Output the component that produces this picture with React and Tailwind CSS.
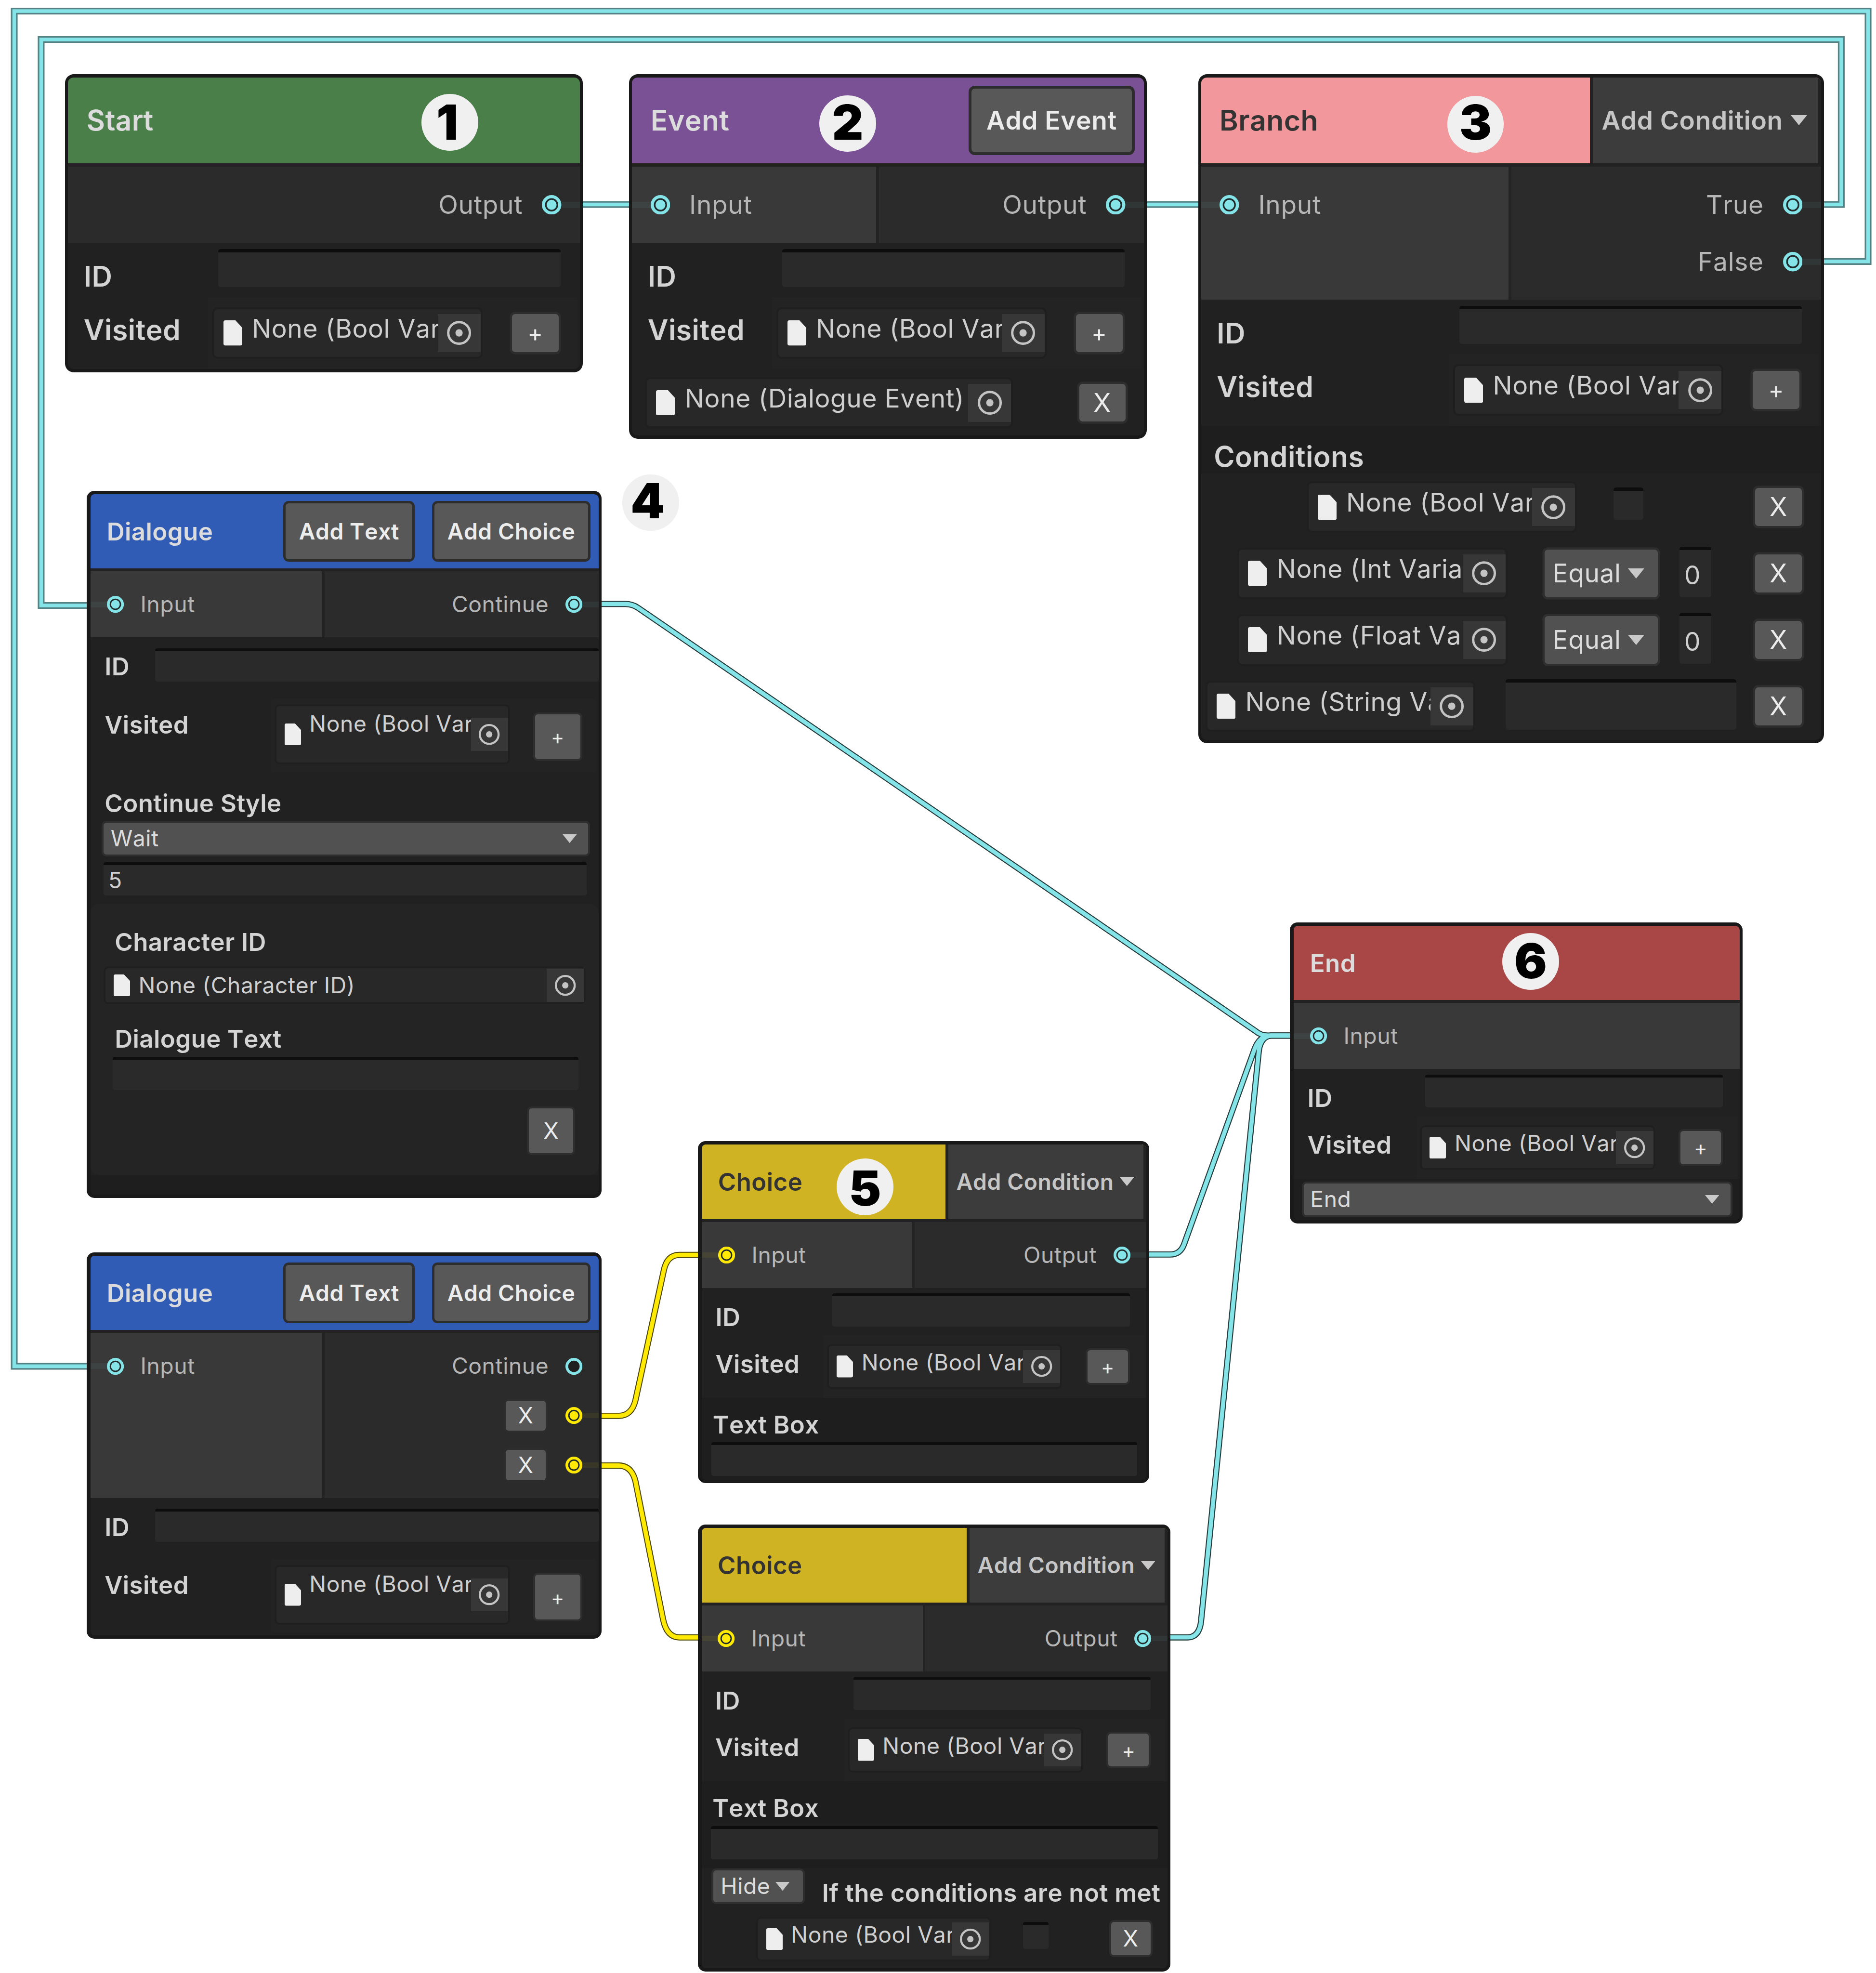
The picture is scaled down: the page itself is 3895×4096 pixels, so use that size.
import React from "react";
import clsx from "clsx";

/* ---------- primitives ---------- */

const label =
  "font-semibold tracking-[0.008em] [font-kerning:none] text-[length:calc(var(--spacing)*22.5)] leading-20 whitespace-nowrap";
const type = "tracking-[0.012em] [font-kerning:none] whitespace-nowrap";
const body = "tracking-[0.012em] [font-kerning:none] whitespace-nowrap text-[length:calc(var(--spacing)*20.4)] leading-20";

function Label({ className, children }) {
  return <div className={clsx(label, "text-[#d4d4d4]", className)}>{children}</div>;
}

function Caret({ className }) {
  return (
    <svg viewBox="0 0 12 8" preserveAspectRatio="none" className={clsx("h-8 w-13 shrink-0", className)}>
      <path d="M0 0H12L6 8Z" fill="#c9c9c9" />
    </svg>
  );
}

function Port({ tone = "cyan", empty = false }) {
  const color = tone === "yellow" ? "#ffe905" : "#84e4e7";
  return (
    <svg viewBox="0 0 16 16" className="size-15.5 shrink-0">
      <circle cx="8" cy="8" r="6.7" fill={empty ? "#1f1f1f" : "#212a2b"} stroke={color} strokeWidth="2.6" />
      {!empty && <circle cx="8" cy="8" r="4.1" fill={color} />}
    </svg>
  );
}

function Stub({ tone = "cyan", empty }) {
  return (
    <div
      className={clsx(
        "h-5 w-14.75 shrink-0",
        empty ? "" : tone === "yellow" ? "bg-[#ffe905]/7" : "bg-[#84e4e7]/6"
      )}
    />
  );
}

function Input({ className, children }) {
  return (
    <div
      className={clsx(
        "flex shrink-0 items-center rounded-[calc(var(--spacing)*2)] border-t-[length:calc(var(--spacing)*2.7)] border-[#0d0d0d] bg-[#2a2a2a] text-[#cfcfcf]",
        body,
        className
      )}
    >
      {children}
    </div>
  );
}

const buttonBox =
  "flex shrink-0 items-center justify-center rounded-[calc(var(--spacing)*2.5)] bg-[#585858] shadow-[0_0_0_calc(var(--spacing)*1.8)_#2d2d2d] text-[#ececec]";

function Button({ className, children }) {
  return (
    <div className={clsx(buttonBox, className)}>
      <span className={body}>{children}</span>
    </div>
  );
}

function Plus({ className }) {
  return (
    <div className={clsx(buttonBox, className)}>
      <span className={clsx(type, "pt-0.5 text-[length:calc(var(--spacing)*18.5)] leading-20")}>+</span>
    </div>
  );
}

function Dropdown({ className, children, caret = "ml-auto mr-10.5" }) {
  return (
    <div
      className={clsx(
        "flex shrink-0 items-center rounded-[calc(var(--spacing)*2.5)] bg-[#515151] shadow-[0_0_0_calc(var(--spacing)*1.8)_#2e2e2e]",
        className
      )}
    >
      <span className={clsx(body, "text-[#dcdcdc]")}>{children}</span>
      <Caret className={caret} />
    </div>
  );
}

function ObjectField({ className = "w-211.75 h-37.75", raise = "mb-7.5", children }) {
  return (
    <div
      className={clsx(
        "flex shrink-0 items-center rounded-[calc(var(--spacing)*2.5)] bg-[#282828] shadow-[0_0_0_calc(var(--spacing)*1.5)_#1f1f1f]",
        className
      )}
    >
      <svg viewBox="0 0 15 20" preserveAspectRatio="none" className="ml-7.25 h-20 w-15 shrink-0">
        <path d="M1.5 0H9.5L15 6V18.5Q15 20 13.5 20H1.5Q0 20 0 18.5V1.5Q0 0 1.5 0Z" fill="#eeeeee" />
      </svg>
      <div className={clsx("ml-7.75 min-w-0 flex-1 overflow-hidden", raise)}>
        <div className={clsx(type, "text-[length:calc(var(--spacing)*20.4)] leading-28 text-[#cfcfcf]")}>{children}</div>
      </div>
      <div className="flex h-30.25 w-34 shrink-0 items-center justify-center bg-[#373737]">
        <svg viewBox="0 0 20 20" className="size-20">
          <circle cx="10" cy="10" r="8.6" fill="none" stroke="#c4c4c4" strokeWidth="1.9" />
          <circle cx="10" cy="10" r="2.9" fill="#c4c4c4" />
        </svg>
      </div>
    </div>
  );
}

/* ---------- node parts ---------- */

function Node({ place, size, scale, border, children }) {
  return (
    <div className={clsx("absolute", place)}>
      <div className={scale}>
        <div
          className={clsx(
            "flex flex-col overflow-hidden rounded-[calc(var(--spacing)*7)] border-[#191919] bg-[#212121]",
            border,
            size
          )}
        >
          {children}
        </div>
      </div>
    </div>
  );
}

const LARGE = {
  scale: "[--spacing:2.6123px]",
  border: "border-x-[6px] border-y-[7px]",
};
const SMALL = {
  scale: "[--spacing:2.2693px]",
  border: "border-y-[7px] border-l-[8px] border-r-[6px]",
};

function Header({ title, color, ink = "text-[#dcdcdc]", children }) {
  return (
    <div className={clsx("flex h-68 shrink-0 items-center", color)}>
      <span className={clsx(label, ink, "mt-0.5 ml-14.75")}>{title}</span>
      {children}
    </div>
  );
}

function HeaderButton({ className, children }) {
  return (
    <div
      className={clsx(
        "flex h-55.25 items-center justify-center rounded-[calc(var(--spacing)*5)] border-[length:calc(var(--spacing)*2.3)] border-[#2d2d2d] bg-[#585858]",
        className
      )}
    >
      <span className={clsx(body, "mt-0.5 font-semibold text-[#ececec]")}>{children}</span>
    </div>
  );
}

function AddCondition() {
  return (
    <div className="ml-auto flex h-full w-183.75 items-center border-x-[length:calc(var(--spacing)*2.65)] border-[#222222] bg-[#3c3c3c] pl-7.25">
      <span className={clsx(body, "mt-0.5 font-semibold text-[#c6c6c6]")}>Add Condition</span>
      <Caret className="mr-8.75 ml-auto" />
    </div>
  );
}

function InPort({ tone }) {
  return (
    <div className="flex h-45.25 items-center">
      <Stub tone={tone} />
      <Port tone={tone} />
      <span className={clsx(body, "ml-15.25 text-[#b6b6b6]")}>Input</span>
    </div>
  );
}

function OutPort({ tone, empty, remove, children }) {
  return (
    <div className="flex h-45.25 items-center justify-end">
      {remove ? (
        <Button className="mr-18 h-27.5 w-36.5">X</Button>
      ) : (
        <span className={clsx(body, "mr-15.25 text-[#b6b6b6]")}>{children}</span>
      )}
      <Port tone={tone} empty={empty} />
      <Stub tone={tone} empty={empty} />
    </div>
  );
}

function Ports({ left, leftWidth, children }) {
  return (
    <div className="flex shrink-0 border-t-[length:calc(var(--spacing)*2.7)] border-[#222222]">
      {left && (
        <div
          className={clsx(
            "bg-[#393939] pt-7.75 pb-7.5",
            leftWidth,
            children && "border-r-[length:calc(var(--spacing)*2.5)] border-[#232323]"
          )}
        >
          {left}
        </div>
      )}
      {children && <div className="min-w-0 flex-1 bg-[#2b2b2b] pt-7.75 pb-7.5">{children}</div>}
    </div>
  );
}

function IdVisited() {
  return (
    <>
      <div className="flex h-43.25 shrink-0 items-start">
        <Label className="mt-16.75 ml-12.5">ID</Label>
        <Input className="mt-5 mr-15.25 ml-auto h-30.25 w-272.25" />
      </div>
      <div className="flex h-57.25 shrink-0 items-start">
        <Label className="mt-16.25 ml-12.5">Visited</Label>
        <div className="mr-2 ml-auto flex h-full items-center bg-[#232323] pr-15 pl-5">
          <ObjectField>None (Bool Var</ObjectField>
          <Plus className="ml-25 h-30.25 w-37" />
        </div>
      </div>
    </>
  );
}

function DialogueIdVisited() {
  return (
    <>
      <div className="flex h-56.25 shrink-0 items-start">
        <Label className="mt-16.75 ml-12.75">ID</Label>
        <Input className="mt-10 ml-auto h-30.25 w-405.5" />
      </div>
      <div className="flex h-67 shrink-0 items-start">
        <Label className="mt-13.5 ml-12.75">Visited</Label>
        <div className="mr-2 ml-auto flex h-full bg-[#232323] pt-6.75 pr-14.75 pl-5">
          <ObjectField className="h-51.25 w-211.75" raise="mb-19.5">
            None (Bool Var
          </ObjectField>
          <Plus className="mt-7.25 ml-25 h-41 w-41" />
        </div>
      </div>
    </>
  );
}

function DialogueHeader() {
  return (
    <Header title="Dialogue" color="bg-[#305cb5]">
      <HeaderButton className="ml-auto w-120.25">Add Text</HeaderButton>
      <HeaderButton className="mr-7.25 ml-15.75 w-145">Add Choice</HeaderButton>
    </Header>
  );
}

function TextBox() {
  return (
    <div className="h-79.5 shrink-0 bg-[#1e1e1e] pt-14.5">
      <Label className="ml-10">Text Box</Label>
      <Input className="mx-8.75 mt-6.25 h-30.5" />
    </div>
  );
}

function NumberCondition({ name }) {
  return (
    <div className="flex h-52.75 shrink-0 items-start justify-end pt-7.75 pr-15.25">
      <ObjectField>{name}</ObjectField>
      <Dropdown className="ml-31 h-37.75 w-90.25 pl-6.5" caret="ml-5.5">
        Equal
      </Dropdown>
      <Input className="-mt-2.5 ml-17 h-40.25 w-25.25 pt-2.75 pl-4">0</Input>
      <Button className="mt-3.75 ml-35 h-30.25 w-37">X</Button>
    </div>
  );
}

function Badge({ place, children, nudge }) {
  return (
    <div
      className={clsx(
        "absolute flex size-45 items-center justify-center rounded-full bg-[#f0f0f0] text-[length:calc(var(--spacing)*38.5)] leading-45 font-black text-black",
        place
      )}
    >
      <span className={nudge}>{children}</span>
    </div>
  );
}

/* ---------- edges ---------- */

const loops = [
  "M1449 162.5H1463.4V31.4H32.7V481.2H70",
  "M1449 207.8H1484.7V8.8H11.3V1085.8H70",
  "M462 162.5H501",
  "M910 162.5H953",
];
const cyanWires = [
  "M477 480H497Q502.5 480 507 483L998 819.5Q1002 823 1008 823H1027",
  "M912 997H930Q938 997 941 989L997 834Q1001 823 1010 823H1027",
  "M929 1301.3H944Q953 1301 954.5 1289L1000.5 835Q1002 824 1010 823H1027",
];
const yellowWires = [
  "M477 1125.2H492Q502 1125 505 1113L527.5 1010Q530 997.3 540 997.3H557",
  "M477 1164.7H492Q502 1165 505 1177L527 1287Q530 1301.3 540 1301.3H557",
];

function Wires() {
  const layer = (paths, stroke, width) =>
    paths.map((d) => <path key={d + stroke} d={d} stroke={stroke} strokeWidth={width} />);
  return (
    <svg viewBox="0 0 1491 1568" preserveAspectRatio="none" fill="none" className="absolute inset-0 h-full w-full">
      {layer(loops, "#538184", 5.4)}
      {layer(loops, "#84e4e7", 2.9)}
      {layer(cyanWires, "#23393a", 4.9)}
      {layer(cyanWires, "#84e4e7", 3.3)}
      {layer(yellowWires, "#4a4408", 4.9)}
      {layer(yellowWires, "#ffe905", 3.4)}
    </svg>
  );
}

/* ---------- canvas ---------- */

export default function App() {
  return (
    <div className="relative h-[4096px] w-[3895px] overflow-hidden bg-white font-['Inter',sans-serif] [--spacing:2.6123px]">
      <Wires />

      <Node {...LARGE} place="left-51.75 top-59" size="w-411.5 h-236.75">
        <Header title="Start" color="bg-[#4b7f4a]" />
        <Ports>
          <OutPort>Output</OutPort>
        </Ports>
        <IdVisited />
      </Node>

      <Node {...LARGE} place="left-500 top-59" size="w-411.5 h-289.75">
        <Header title="Event" color="bg-[#795194]">
          <HeaderButton className="mr-7.5 ml-auto w-131.75">Add Event</HeaderButton>
        </Header>
        <Ports left={<InPort />} leftWidth="w-196.5">
          <OutPort>Output</OutPort>
        </Ports>
        <IdVisited />
        <div className="flex items-start justify-between pt-8 pr-14.75 pl-12">
          <ObjectField className="h-37.5 w-289.25">None (Dialogue Event)</ObjectField>
          <Button className="mt-3.75 h-30 w-36.75">X</Button>
        </div>
      </Node>

      <Node {...LARGE} place="left-952.25 top-59" size="w-497.25 h-531.75">
        <Header title="Branch" color="bg-[#f2979b]" ink="text-[#333333]">
          <AddCondition />
        </Header>
        <Ports left={<InPort />} leftWidth="w-246.75">
          <OutPort>True</OutPort>
          <OutPort>False</OutPort>
        </Ports>
        <IdVisited />
        <div className="h-37.75 shrink-0 bg-[#1e1e1e] pt-14.25">
          <Label className="ml-10.25">Conditions</Label>
        </div>
        <div className="flex h-52.75 shrink-0 items-start justify-end pt-7.75 pr-15.25">
          <ObjectField>None (Bool Var</ObjectField>
          <Input className="mt-3.5 ml-30.75 h-25.5 w-23.5" />
          <Button className="mt-3.75 ml-89 h-30.25 w-37">X</Button>
        </div>
        <NumberCondition name="None (Int Varia" />
        <NumberCondition name="None (Float Va" />
        <div className="flex items-start justify-end pt-7.75 pr-15.25">
          <ObjectField className="h-37.75 w-211.25">None (String Va</ObjectField>
          <Input className="-mt-2.5 ml-25.5 h-40.25 w-183.5" />
          <Button className="mt-3.75 ml-15 h-30.25 w-37">X</Button>
        </div>
      </Node>

      <Node {...SMALL} place="left-69 top-390" size="w-470.75 h-647">
        <DialogueHeader />
        <Ports left={<InPort />} leftWidth="w-214">
          <OutPort>Continue</OutPort>
        </Ports>
        <DialogueIdVisited />
        <div className="h-120.25 shrink-0 pt-18.5">
          <Label className="ml-12.75">Continue Style</Label>
          <Dropdown className="mt-7.75 mr-9.5 ml-11.75 h-29 pl-6.5">Wait</Dropdown>
          <Input className="mt-7 mr-11 ml-11.75 h-30.5 pl-4.5">5</Input>
        </div>
        <div className="h-248.5 shrink-0 rounded-[calc(var(--spacing)*8)] bg-[#242424] pt-25.25">
          <Label className="ml-22">Character ID</Label>
          <ObjectField className="mt-14 mr-13.25 ml-13.75 h-31" raise="mb-0">
            None (Character ID)
          </ObjectField>
          <Label className="mt-23.5 ml-22">Dialogue Text</Label>
          <Input className="mt-6.25 mr-18.5 ml-20 h-30.5" />
          <Button className="mt-17 mr-23 ml-auto h-40.75 w-40.5">X</Button>
        </div>
        <div className="flex-1 bg-[#1e1e1e]" />
      </Node>

      <Node {...SMALL} place="left-69 top-995.25" size="w-470.75 h-353.25">
        <DialogueHeader />
        <Ports left={<InPort />} leftWidth="w-214">
          <OutPort empty>Continue</OutPort>
          <OutPort tone="yellow" remove />
          <OutPort tone="yellow" remove />
        </Ports>
        <DialogueIdVisited />
      </Node>

      <Node {...SMALL} place="left-554.75 top-907" size="w-413 h-312.75">
        <Header title="Choice" color="bg-[#d0b322]" ink="text-[#333333]">
          <AddCondition />
        </Header>
        <Ports left={<InPort tone="yellow" />} leftWidth="w-194.5">
          <OutPort>Output</OutPort>
        </Ports>
        <IdVisited />
        <TextBox />
      </Node>

      <Node {...SMALL} place="left-554.5 top-1211.75" size="w-432.5 h-408.75">
        <Header title="Choice" color="bg-[#d0b322]" ink="text-[#333333]">
          <AddCondition />
        </Header>
        <Ports left={<InPort tone="yellow" />} leftWidth="w-204.5">
          <OutPort>Output</OutPort>
        </Ports>
        <IdVisited />
        <TextBox />
        <div className="flex h-46.25 shrink-0 items-start pt-2">
          <Dropdown className="ml-11 h-29.25 w-81.75 pl-6.5" caret="ml-4.5">
            Hide
          </Dropdown>
          <Label className="mt-10.75 ml-17.5">If the conditions are not met</Label>
        </div>
        <div className="flex items-start justify-end pr-15.5">
          <ObjectField className="h-37.25 w-211.25">None (Bool Var</ObjectField>
          <Input className="mt-2.75 ml-31 h-25 w-23.25" />
          <Button className="mt-3 ml-57.25 h-30.25 w-36.25">X</Button>
        </div>
      </Node>

      <Node {...SMALL} place="left-1025.25 top-733" size="w-414 h-275.5">
        <Header title="End" color="bg-[#a94646]" />
        <Ports left={<InPort />} leftWidth="w-full" />
        <IdVisited />
        <div className="flex-1 bg-[#1e1e1e] pt-4.25">
          <Dropdown className="mr-8.25 ml-9 h-29 pl-6">End</Dropdown>
        </div>
      </Node>

      <Badge place="left-335 top-74.75" nudge="-ml-4">1</Badge>
      <Badge place="left-651.25 top-75.75" nudge="-mt-2">2</Badge>
      <Badge place="left-1150.25 top-76.25" nudge="-mt-3">3</Badge>
      <Badge place="left-494.75 top-377" nudge="-mt-3 -ml-5">4</Badge>
      <Badge place="left-665 top-920.75" nudge="mt-2">5</Badge>
      <Badge place="left-1194 top-741.5" nudge="-mt-1">6</Badge>
    </div>
  );
}
